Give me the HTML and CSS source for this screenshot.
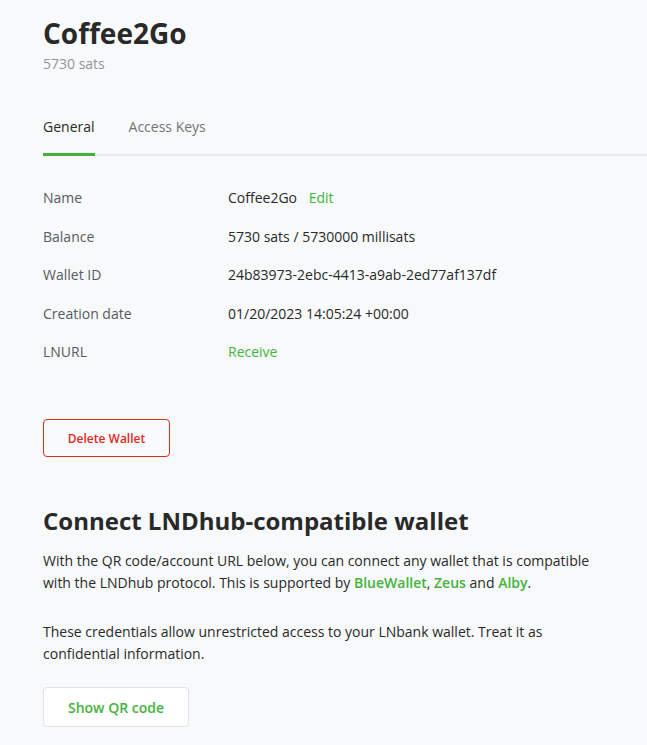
FILE: index.html
```html
<!DOCTYPE html>
<html>
<head>
<meta charset="utf-8">
<link rel="stylesheet" href="styles.css">
</head>
<body>
<main class="page">
  <header class="head">
    <h1 class="title">Coffee2Go</h1>
    <div class="subtitle">5730 sats</div>
  </header>
  <nav class="tabs">
    <a class="tab active">General</a>
    <a class="tab">Access Keys</a>
  </nav>
  <dl class="details">
    <div class="row"><dt>Name</dt><dd>Coffee2Go <a class="link edit">Edit</a></dd></div>
    <div class="row"><dt>Balance</dt><dd>5730 sats / 5730000 millisats</dd></div>
    <div class="row"><dt>Wallet ID</dt><dd>24b83973-2ebc-4413-a9ab-2ed77af137df</dd></div>
    <div class="row"><dt>Creation date</dt><dd>01/20/2023 14:05:24 +00:00</dd></div>
    <div class="row"><dt>LNURL</dt><dd><a class="link">Receive</a></dd></div>
  </dl>
  <button class="btn btn-danger">Delete Wallet</button>
  <section class="connect">
    <h2 class="heading">Connect LNDhub-compatible wallet</h2>
    <p class="text">With the QR code/account URL below, you can connect any wallet that is compatible with the LNDhub protocol. This is supported by <a class="link strong">BlueWallet</a>, <a class="link strong">Zeus</a> and <a class="link strong">Alby</a>.</p>
    <p class="text">These credentials allow unrestricted access to your LNbank wallet. Treat it as<br>confidential information.</p>
    <button class="btn btn-light">Show QR code</button>
  </section>
</main>
</body>
</html>
```
FILE: styles.css
```css
* { box-sizing: border-box; }
html, body { margin: 0; padding: 0; }
body {
  background: #f8f9fa;
  font-family: "Open Sans", "Noto Sans", sans-serif;
  color: #292929;
  font-size: 14px;
}
.page {
  padding: 14px 0 0 43px;
}
.title {
  margin: 0;
  font-size: 28px;
  font-weight: 700;
  line-height: 38px;
  color: #292929;
}
.subtitle {
  color: #8f979e;
  font-size: 14px;
  line-height: 20px;
  margin-top: 2px;
}
.tabs {
  display: flex;
  gap: 34px;
  margin-top: 43px;
  border-bottom: 2px solid #e7e9ec;
}
.tab {
  display: block;
  font-size: 14px;
  line-height: 20px;
  padding-bottom: 16px;
  color: #6c757d;
  margin-bottom: -2px;
  border-bottom: 3px solid transparent;
}
.tab.active {
  color: #292929;
  border-bottom-color: #44b33d;
}
.details {
  margin: 32px 0 0;
  display: flex;
  flex-direction: column;
  gap: 18.5px;
}
.row {
  display: flex;
  line-height: 20px;
}
.row dt {
  width: 185px;
  color: #545b62;
}
.row dd { margin: 0; color: #292929; }
.link { color: #44b33d; text-decoration: none; }
.edit { margin-left: 8px; }
.strong { font-weight: 600; }
.btn {
  font-family: inherit;
  font-weight: 600;
  border-radius: 4px;
  cursor: pointer;
}
.btn-danger {
  margin-top: 57px;
  width: 127px;
  height: 38px;
  font-size: 12px;
  color: #e2291e;
  background: transparent;
  border: 1px solid #e2291e;
}
.connect { margin-top: 48px; }
.heading {
  margin: 0;
  font-size: 24px;
  font-weight: 700;
  line-height: 32px;
  color: #292929;
}
.text {
  margin: 13px 0 0;
  line-height: 22px;
  width: 560px;
  color: #292929;
}
.text + .text { margin-top: 27px; }
.btn-light {
  margin-top: 22px;
  width: 146px;
  height: 40px;
  font-size: 14px;
  color: #44b33d;
  background: #fff;
  border: 1px solid #dee2e6;
}
```
